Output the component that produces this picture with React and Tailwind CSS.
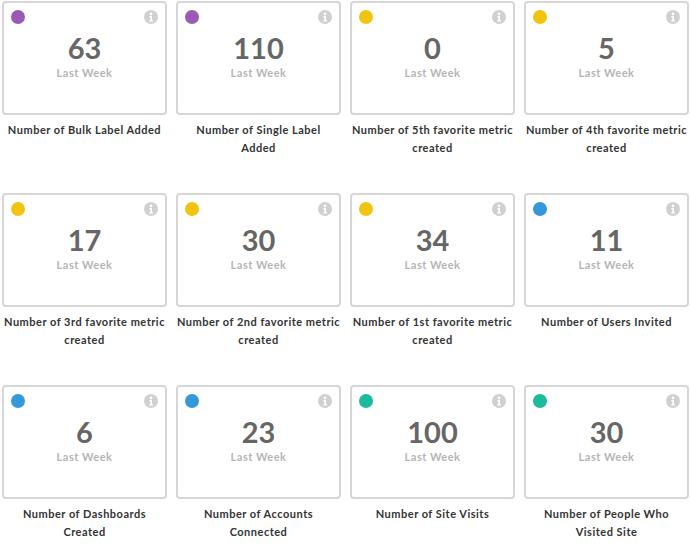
const metrics = [
  { value: 63, color: "bg-[#9b59b6]", label: ["Number of Bulk Label Added"] },
  { value: 110, color: "bg-[#9b59b6]", label: ["Number of Single Label", "Added"] },
  { value: 0, color: "bg-[#f1c40f]", label: ["Number of 5th favorite metric", "created"] },
  { value: 5, color: "bg-[#f1c40f]", label: ["Number of 4th favorite metric", "created"] },
  { value: 17, color: "bg-[#f1c40f]", label: ["Number of 3rd favorite metric", "created"] },
  { value: 30, color: "bg-[#f1c40f]", label: ["Number of 2nd favorite metric", "created"] },
  { value: 34, color: "bg-[#f1c40f]", label: ["Number of 1st favorite metric", "created"] },
  { value: 11, color: "bg-[#3498db]", label: ["Number of Users Invited"] },
  { value: 6, color: "bg-[#3498db]", label: ["Number of Dashboards", "Created"] },
  { value: 23, color: "bg-[#3498db]", label: ["Number of Accounts", "Connected"] },
  { value: 100, color: "bg-[#1abc9c]", label: ["Number of Site Visits"] },
  { value: 30, color: "bg-[#1abc9c]", label: ["Number of People Who", "Visited Site"] },
];

function InfoIcon() {
  return (
    <svg width="14" height="14" viewBox="0 0 14 14">
      <circle cx="7" cy="7" r="7" fill="#d0d0d0" />
      <circle cx="7" cy="3.9" r="1.3" fill="#fff" />
      <path d="M5.3 6h2.7v4.2h1v1.3H5.3v-1.3h1V7.3h-1z" fill="#fff" />
    </svg>
  );
}

function MetricCard({ value, color, label }) {
  return (
    <div>
      <div className="h-[114px] rounded-[4px] border-2 border-[#d6d6d6] bg-white">
        <div className="flex items-center justify-between px-[7px] pt-[7px]">
          <span className={`h-[14px] w-[14px] rounded-full ${color}`}></span>
          <InfoIcon />
        </div>
        <div className="mt-[9px] text-center text-[29px] font-bold leading-[29px] text-[#666666]">
          {value}
        </div>
        <div className="mt-[4px] text-center text-[11px] font-bold leading-[14px] tracking-[0.5px] text-[#b5b5b5]">
          Last Week
        </div>
      </div>
      <p className="mt-[6px] text-center text-[11px] font-bold leading-[18px] tracking-[0.5px] text-[#333333]">
        {label.map((line) => (
          <span key={line} className="block whitespace-nowrap">
            {line}
          </span>
        ))}
      </p>
    </div>
  );
}

export default function App() {
  return (
    <div
      className="h-[546px] w-[690px] overflow-hidden bg-white pl-[2px] pt-[1px]"
      style={{ fontFamily: "Lato, 'Liberation Sans', sans-serif" }}
    >
      <div className="grid grid-cols-[repeat(4,165px)] gap-x-[9px] gap-y-[36px]">
        {metrics.map((m, i) => (
          <MetricCard key={i} {...m} />
        ))}
      </div>
    </div>
  );
}
